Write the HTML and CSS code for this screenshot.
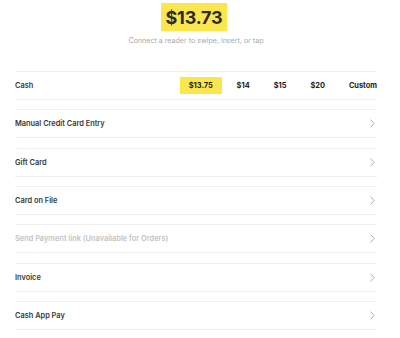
FILE: index.html
```html
<!DOCTYPE html>
<html>
<head>
<meta charset="utf-8">
<link rel="stylesheet" href="styles.css">
</head>
<body>
<div class="page">
  <header class="head">
    <div class="amount">$13.73</div>
    <div class="hint">Connect a reader to swipe, insert, or tap</div>
  </header>
  <ul class="list">
    <li class="row cash">
      <span class="label">Cash</span>
      <div class="opts">
        <span class="opt sel">$13.75</span>
        <span class="opt">$14</span>
        <span class="opt">$15</span>
        <span class="opt">$20</span>
        <span class="opt last">Custom</span>
      </div>
    </li>
    <li class="row"><span class="label">Manual Credit Card Entry</span><svg class="chev" viewBox="0 0 5 9"><path d="M0.6 0.6 L4.2 4.5 L0.6 8.4"/></svg></li>
    <li class="row"><span class="label">Gift Card</span><svg class="chev" viewBox="0 0 5 9"><path d="M0.6 0.6 L4.2 4.5 L0.6 8.4"/></svg></li>
    <li class="row"><span class="label">Card on File</span><svg class="chev" viewBox="0 0 5 9"><path d="M0.6 0.6 L4.2 4.5 L0.6 8.4"/></svg></li>
    <li class="row off"><span class="label">Send Payment link (Unavailable for Orders)</span><svg class="chev" viewBox="0 0 5 9"><path d="M0.6 0.6 L4.2 4.5 L0.6 8.4"/></svg></li>
    <li class="row"><span class="label">Invoice</span><svg class="chev" viewBox="0 0 5 9"><path d="M0.6 0.6 L4.2 4.5 L0.6 8.4"/></svg></li>
    <li class="row"><span class="label">Cash App Pay</span><svg class="chev" viewBox="0 0 5 9"><path d="M0.6 0.6 L4.2 4.5 L0.6 8.4"/></svg></li>
  </ul>
</div>
</body>
</html>
```

FILE: styles.css
```css
* { box-sizing: border-box; }
html, body { margin: 0; padding: 0; background: #fff; }
body { font-family: "Inter", "Liberation Sans", sans-serif; color: #333; }
.page { width: 362px; margin-left: 15px; padding-top: 3px; }
.head { display: flex; flex-direction: column; align-items: center; }
.amount {
  background: #fbe74d;
  height: 28px;
  width: 66px;
  margin-left: -4px;
  display: flex; align-items: center; justify-content: center;
  font-size: 18px; font-weight: 700; color: #2b2b2b; letter-spacing: -0.2px;
}
.hint { margin-top: 5px; font-size: 7.1px; color: #a9a9a9; }
.list { list-style: none; margin: 26px 0 0; padding: 0; display: flex; flex-direction: column; gap: 9.33px; }
.row {
  height: 29px;
  border-top: 1px solid #f0f0f0;
  border-bottom: 1px solid #eeeeee;
  display: flex; align-items: center; justify-content: space-between;
  font-size: 7.4px; font-weight: 600; color: #3a3a3a;
}
.row.off { color: #c4c4c4; }
.chev { width: 5px; height: 9px; margin-right: 2px; fill: none; stroke: #9a9a9a; stroke-width: 0.8; }
.opts { display: flex; align-items: center; gap: 6px; }
.opt { padding: 0 9px; height: 17px; display: flex; align-items: center; color: #222; font-weight: 700; font-size: 7.4px; }
.opt.sel { background: #fbe74d; }
.opt.last { padding-right: 0; }
```
